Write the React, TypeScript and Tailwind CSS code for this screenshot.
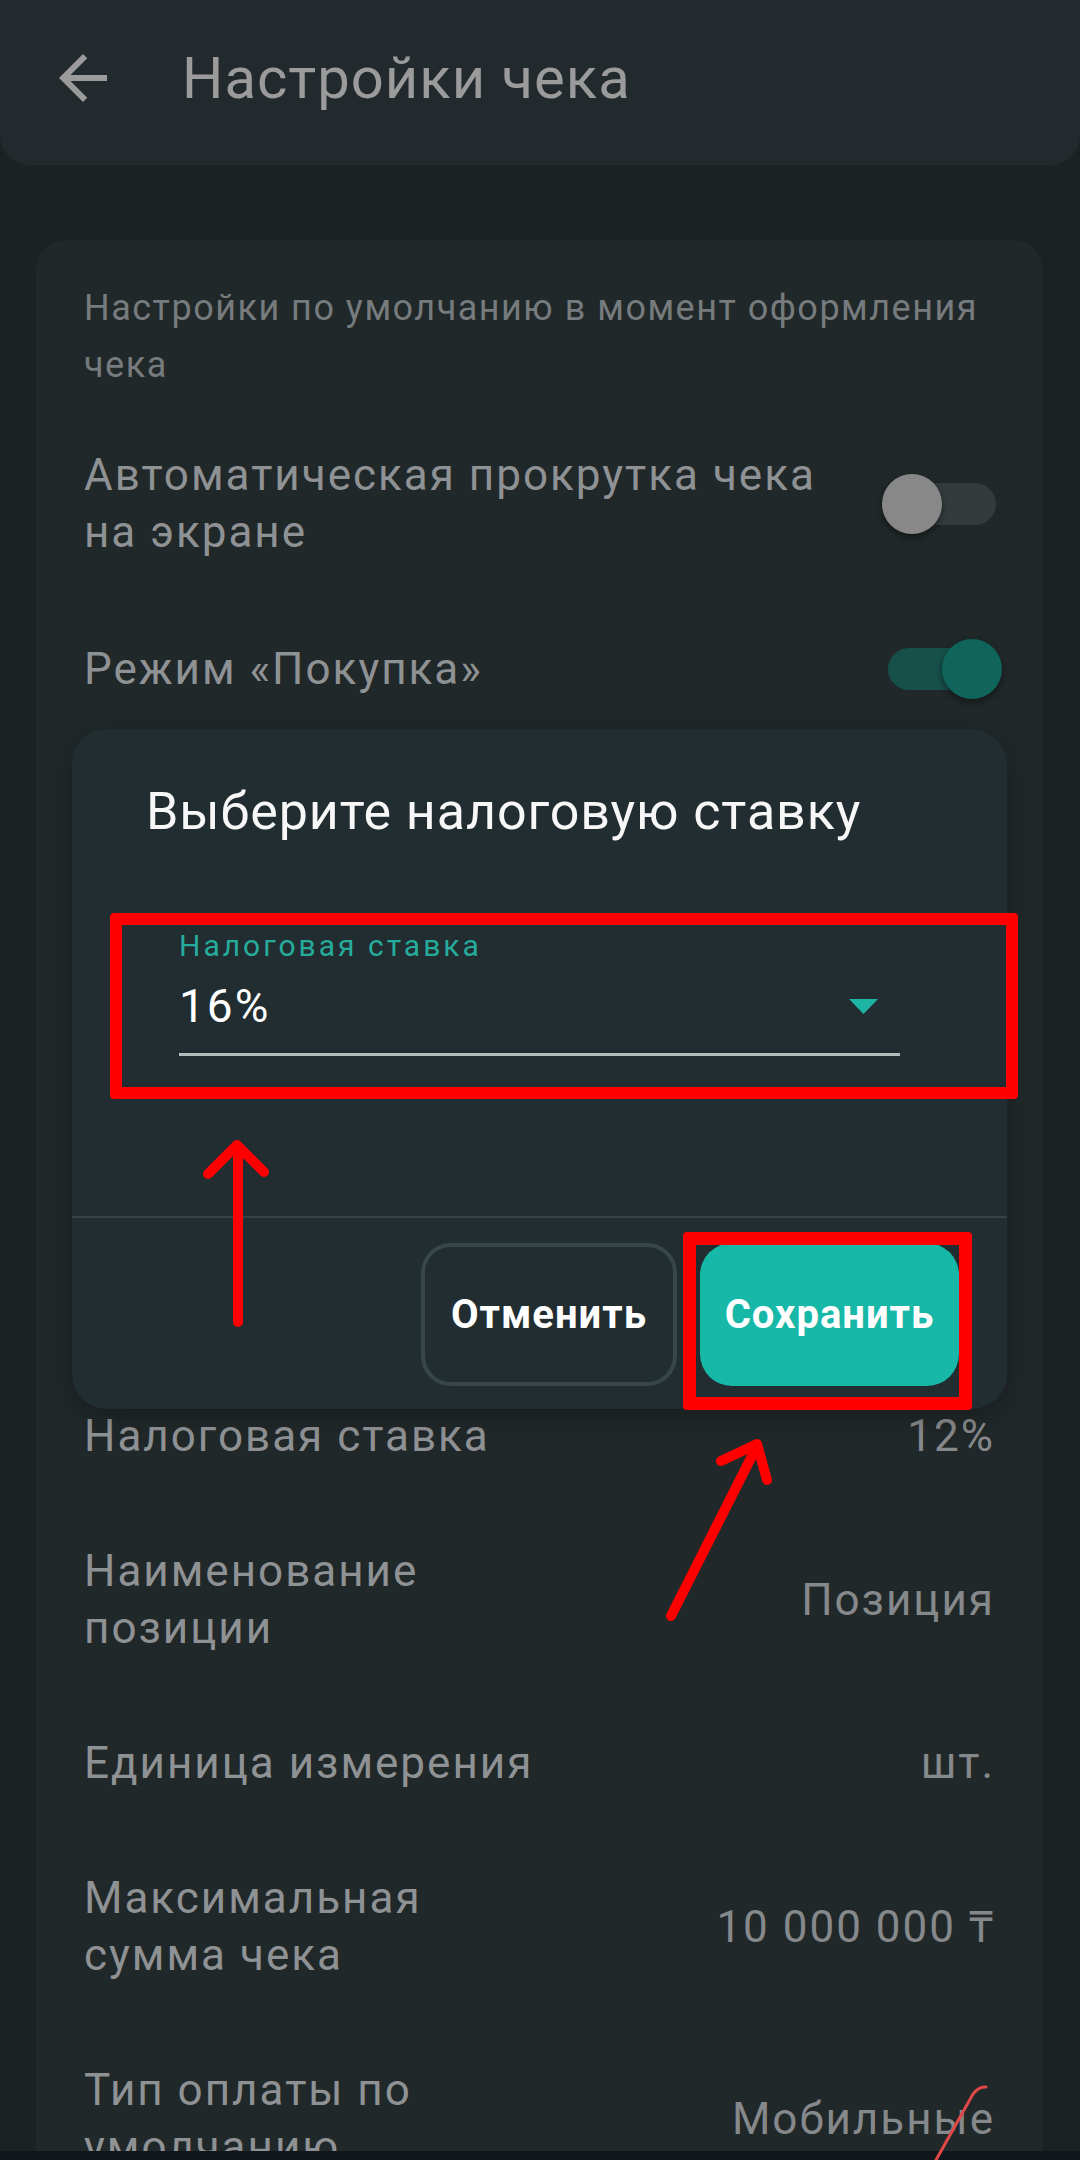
import React from "react";

function Toggle({ on }: { on: boolean }) {
  return (
    <div className="relative h-[60px] w-[120px] shrink-0 -mr-[7px]">
      <div
        className={
          on
            ? "absolute left-[6px] right-[6px] top-[9px] h-[42px] rounded-full bg-[#165049]"
            : "absolute left-[6px] right-[6px] top-[9px] h-[42px] rounded-full bg-[#343b3d]"
        }
      />
      <div
        className={
          on
            ? "absolute left-[60px] top-0 h-[60px] w-[60px] rounded-full bg-[#0f655b] shadow-[0_3px_6px_rgba(0,0,0,0.45)]"
            : "absolute left-0 top-0 h-[60px] w-[60px] rounded-full bg-[#888888] shadow-[0_3px_6px_rgba(0,0,0,0.45)]"
        }
      />
    </div>
  );
}

function Row({ label, value }: { label: string; value: string }) {
  return (
    <div className="flex items-center justify-between py-[39px]">
      <div className="w-[470px] text-[44px] leading-[57px] tracking-[2px] text-[#8f9294]">{label}</div>
      <div className="text-right text-[44px] leading-[57px] tracking-[2px] text-[#86898b]">{value}</div>
    </div>
  );
}

export default function App() {
  return (
    <div className="relative h-[2160px] w-[1080px] overflow-hidden bg-[#1c2224] font-[Roboto,'Noto_Sans',sans-serif]">
      {/* Top app bar */}
      <div className="flex h-[165px] w-full items-start rounded-b-[30px] bg-[#222a2d] pl-[47px] pt-[42px]">
        <svg width="72" height="72" viewBox="0 0 24 24" className="shrink-0">
          <path
            d="M20 11H7.83l5.59-5.59L12 4l-8 8 8 8 1.41-1.41L7.83 13H20v-2z"
            fill="#9b9b9b"
          />
        </svg>
        <div className="ml-[63px] text-[58px] leading-[72px] tracking-[1px] text-[#9b9b9b]">Настройки чека</div>
      </div>

      {/* Settings card */}
      <div className="ml-[36px] mt-[75px] w-[1007px] rounded-[30px] bg-[#212829] px-[48px] pt-[40px]">
        <div className="text-[36px] leading-[57px] tracking-[1.5px] text-[#767b7d]">
          Настройки по умолчанию в момент оформления чека
        </div>

        <div className="mt-[14px] flex items-center justify-between py-[39px]">
          <div className="w-[760px] text-[44px] leading-[57px] tracking-[2px] text-[#8f9294]">
            Автоматическая прокрутка чека на экране
          </div>
          <Toggle on={false} />
        </div>

        <div className="flex items-center justify-between py-[39px]">
          <div className="text-[44px] leading-[57px] tracking-[2px] text-[#8f9294]">Режим «Покупка»</div>
          <Toggle on={true} />
        </div>

        <div className="h-[631px]" aria-hidden="true" />

        <Row label="Налоговая ставка" value="12%" />
        <Row label="Наименование позиции" value="Позиция" />
        <Row label="Единица измерения" value="шт." />
        <Row label="Максимальная сумма чека" value="10 000 000 ₸" />
        <Row label="Тип оплаты по умолчанию" value="Мобильные" />
      </div>

      {/* Dialog */}
      <div className="absolute left-[72px] top-[729px] flex h-[680px] w-[935px] flex-col rounded-[35px] bg-[#212d30] shadow-[0_8px_24px_rgba(0,0,0,0.25)]">
        <div className="pl-[74px] pt-[52px] text-[52px] leading-[62px] tracking-[0.9px] text-[#f7f7f7]">
          Выберите налоговую ставку
        </div>
        <div className="ml-[107px] mt-[85px] w-[721px]">
          <div className="text-[30px] leading-[36px] tracking-[3px] text-[#26ab9c]">Налоговая ставка</div>
          <div className="mt-[14px] flex h-[56px] items-center justify-between pr-[22px]">
            <div className="text-[46px] leading-[56px] tracking-[2px] text-white">16%</div>
            <svg width="29" height="15" viewBox="0 0 29 15">
              <polygon points="0,0 29,0 14.5,15" fill="#1fb5a5" />
            </svg>
          </div>
          <div className="mt-[19px] h-[3px] bg-[#b3bbbb]" />
        </div>
        <div className="mt-[160px] h-[2px] bg-[#35424a]" />
        <div className="mt-[25px] flex justify-end gap-[23px] pr-[48px]">
          <div className="flex h-[143px] w-[256px] items-center justify-center rounded-[30px] border-[4px] border-[#37464a] text-[40px] font-bold tracking-[1px] text-white">
            Отменить
          </div>
          <div className="flex h-[143px] w-[259px] items-center justify-center rounded-[32px] bg-[#17b8a7] text-[40px] font-bold tracking-[1px] text-white">
            Сохранить
          </div>
        </div>
      </div>

      {/* Red annotation boxes */}
      <div className="absolute left-[110px] top-[913px] h-[186px] w-[908px] rounded-[4px] border-[12px] border-[#ff0000]" />
      <div className="absolute left-[683px] top-[1232px] h-[178px] w-[289px] rounded-[4px] border-[13px] border-[#ff0000]" />

      {/* Bottom nav band */}
      <div className="absolute bottom-0 left-0 h-[9px] w-full bg-[#11161a]" />

      {/* Red arrows and scribble */}
      <svg
        className="pointer-events-none absolute left-0 top-0"
        width="1080"
        height="2160"
        viewBox="0 0 1080 2160"
      >
        <g stroke="#ff0000" strokeWidth="10" strokeLinecap="round" strokeLinejoin="round" fill="none">
          <line x1="238" y1="1148" x2="238" y2="1322" />
          <polyline points="208,1174 237,1145 264,1172" />
          <line x1="671" y1="1616" x2="756" y2="1448" />
          <polyline points="721,1461 757,1444 767,1480" />
        </g>
        <path
          d="M986 2087 Q979 2086 973 2094 L936 2160"
          stroke="#e04848"
          strokeWidth="3"
          fill="none"
          strokeLinecap="round"
        />
      </svg>
    </div>
  );
}
